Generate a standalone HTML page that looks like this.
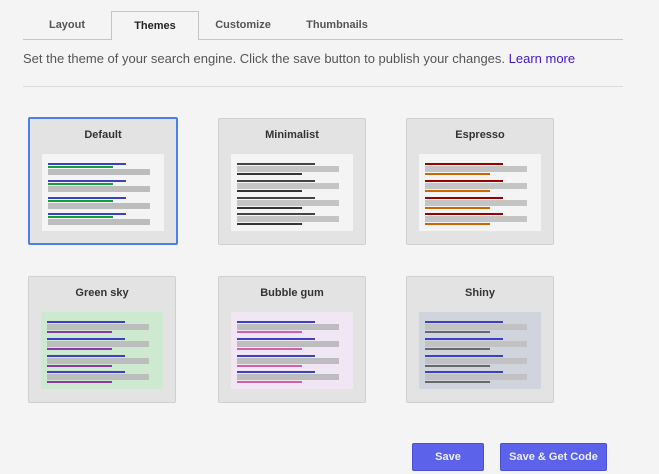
<!DOCTYPE html>
<html><head><meta charset="utf-8"><style>
*{margin:0;padding:0;box-sizing:border-box}
body{width:659px;height:474px;background:#f4f4f4;font-family:"Liberation Sans",Arial,sans-serif;position:relative;overflow:hidden}
.a{position:absolute}
.tab{position:absolute;top:11px;height:29px;font-size:11px;font-weight:bold;color:#555;text-align:center;line-height:28px}
.card{position:absolute;width:148px;height:127px;background:#e3e3e3;border:1px solid #cfcfcf;border-radius:2px}
.card .t{position:absolute;left:0;right:0;top:10px;text-align:center;font-size:11px;font-weight:bold;color:#333}
.pv{position:absolute;left:13px;top:35px;width:122px;height:77px;background:#f4f4f4}
.pv i{position:absolute;left:6px;display:block}
.btn{position:absolute;top:443px;height:28px;background:#5c63ea;border:1px solid #4a50d6;border-radius:2px;color:#eef;font-size:11px;font-weight:bold;text-align:center;line-height:27px}
</style></head><body>
<div class="a" style="left:23px;top:39px;width:600px;height:1px;background:#c4c4c4"></div>
<div class="tab" style="left:23px;width:88px">Layout</div>
<div class="tab" style="left:111px;width:88px;background:#f4f4f4;border:1px solid #c4c4c4;border-bottom:none;color:#222">Themes</div>
<div class="tab" style="left:199px;width:88px">Customize</div>
<div class="tab" style="left:287px;width:100px">Thumbnails</div>
<div class="a" style="left:23px;top:51px;font-size:13px;color:#555;white-space:nowrap">Set the theme of your search engine. Click the save button to publish your changes. <span style="color:#4318c9">Learn more</span></div>
<div class="a" style="left:23px;top:86px;width:600px;height:1px;background:#dcdcdc"></div>

<div class="card" style="left:28px;top:117px;width:150px;height:128px;border:2px solid #4a7ff0"><div class="t" style="top:10px">Default</div>
<div class="pv" style="left:12px;top:35px">
<i style="top:9px;width:78px;height:2px;background:#3c40c4"></i><i style="top:12px;width:65px;height:2px;background:#11a03a"></i><i style="top:15px;width:102px;height:6px;background:#bdbdbd"></i>
<i style="top:26px;width:78px;height:2px;background:#3c40c4"></i><i style="top:29px;width:65px;height:2px;background:#11a03a"></i><i style="top:32px;width:102px;height:6px;background:#bdbdbd"></i>
<i style="top:43px;width:78px;height:2px;background:#3c40c4"></i><i style="top:46px;width:65px;height:2px;background:#11a03a"></i><i style="top:49px;width:102px;height:6px;background:#bdbdbd"></i>
<i style="top:59px;width:78px;height:2px;background:#3c40c4"></i><i style="top:62px;width:65px;height:2px;background:#11a03a"></i><i style="top:65px;width:102px;height:6px;background:#bdbdbd"></i>
</div></div>

<div class="card" style="left:218px;top:118px"><div class="t">Minimalist</div>
<div class="pv" style="left:12px">
<i style="top:9px;width:78px;height:2px;background:#444"></i><i style="top:12px;width:102px;height:6px;background:#c4c4c4"></i><i style="top:19px;width:65px;height:2px;background:#333"></i>
<i style="top:26px;width:78px;height:2px;background:#444"></i><i style="top:29px;width:102px;height:6px;background:#c4c4c4"></i><i style="top:36px;width:65px;height:2px;background:#333"></i>
<i style="top:43px;width:78px;height:2px;background:#444"></i><i style="top:46px;width:102px;height:6px;background:#c4c4c4"></i><i style="top:53px;width:65px;height:2px;background:#333"></i>
<i style="top:59px;width:78px;height:2px;background:#444"></i><i style="top:62px;width:102px;height:6px;background:#c4c4c4"></i><i style="top:69px;width:65px;height:2px;background:#333"></i>
</div></div>

<div class="card" style="left:406px;top:118px"><div class="t">Espresso</div>
<div class="pv" style="left:12px">
<i style="top:9px;width:78px;height:2px;background:#990000"></i><i style="top:12px;width:102px;height:6px;background:#c4c4c4"></i><i style="top:19px;width:65px;height:2px;background:#cc6600"></i>
<i style="top:26px;width:78px;height:2px;background:#990000"></i><i style="top:29px;width:102px;height:6px;background:#c4c4c4"></i><i style="top:36px;width:65px;height:2px;background:#cc6600"></i>
<i style="top:43px;width:78px;height:2px;background:#990000"></i><i style="top:46px;width:102px;height:6px;background:#c4c4c4"></i><i style="top:53px;width:65px;height:2px;background:#cc6600"></i>
<i style="top:59px;width:78px;height:2px;background:#990000"></i><i style="top:62px;width:102px;height:6px;background:#c4c4c4"></i><i style="top:69px;width:65px;height:2px;background:#cc6600"></i>
</div></div>

<div class="card" style="left:28px;top:276px"><div class="t">Green sky</div>
<div class="pv" style="left:12px;background:#cde9cf">
<i style="top:9px;width:78px;height:2px;background:#3c40c4"></i><i style="top:12px;width:102px;height:6px;background:#bdbdbd"></i><i style="top:19px;width:65px;height:2px;background:#8a3aa8"></i>
<i style="top:26px;width:78px;height:2px;background:#3c40c4"></i><i style="top:29px;width:102px;height:6px;background:#bdbdbd"></i><i style="top:36px;width:65px;height:2px;background:#8a3aa8"></i>
<i style="top:43px;width:78px;height:2px;background:#3c40c4"></i><i style="top:46px;width:102px;height:6px;background:#bdbdbd"></i><i style="top:53px;width:65px;height:2px;background:#8a3aa8"></i>
<i style="top:59px;width:78px;height:2px;background:#3c40c4"></i><i style="top:62px;width:102px;height:6px;background:#bdbdbd"></i><i style="top:69px;width:65px;height:2px;background:#8a3aa8"></i>
</div></div>

<div class="card" style="left:218px;top:276px"><div class="t">Bubble gum</div>
<div class="pv" style="left:12px;background:#f1e6f4">
<i style="top:9px;width:78px;height:2px;background:#3c40c4"></i><i style="top:12px;width:102px;height:6px;background:#bdbdbd"></i><i style="top:19px;width:65px;height:2px;background:#d060a8"></i>
<i style="top:26px;width:78px;height:2px;background:#3c40c4"></i><i style="top:29px;width:102px;height:6px;background:#bdbdbd"></i><i style="top:36px;width:65px;height:2px;background:#d060a8"></i>
<i style="top:43px;width:78px;height:2px;background:#3c40c4"></i><i style="top:46px;width:102px;height:6px;background:#bdbdbd"></i><i style="top:53px;width:65px;height:2px;background:#d060a8"></i>
<i style="top:59px;width:78px;height:2px;background:#3c40c4"></i><i style="top:62px;width:102px;height:6px;background:#bdbdbd"></i><i style="top:69px;width:65px;height:2px;background:#d060a8"></i>
</div></div>

<div class="card" style="left:406px;top:276px"><div class="t">Shiny</div>
<div class="pv" style="left:12px;background:#d0d5dd">
<i style="top:9px;width:78px;height:2px;background:#3c40c4"></i><i style="top:12px;width:102px;height:6px;background:#c2c2c2"></i><i style="top:19px;width:65px;height:2px;background:#666870"></i>
<i style="top:26px;width:78px;height:2px;background:#3c40c4"></i><i style="top:29px;width:102px;height:6px;background:#c2c2c2"></i><i style="top:36px;width:65px;height:2px;background:#666870"></i>
<i style="top:43px;width:78px;height:2px;background:#3c40c4"></i><i style="top:46px;width:102px;height:6px;background:#c2c2c2"></i><i style="top:53px;width:65px;height:2px;background:#666870"></i>
<i style="top:59px;width:78px;height:2px;background:#3c40c4"></i><i style="top:62px;width:102px;height:6px;background:#c2c2c2"></i><i style="top:69px;width:65px;height:2px;background:#666870"></i>
</div></div>

<div class="btn" style="left:412px;width:72px">Save</div>
<div class="btn" style="left:500px;width:107px">Save &amp; Get Code</div>
</body></html>
